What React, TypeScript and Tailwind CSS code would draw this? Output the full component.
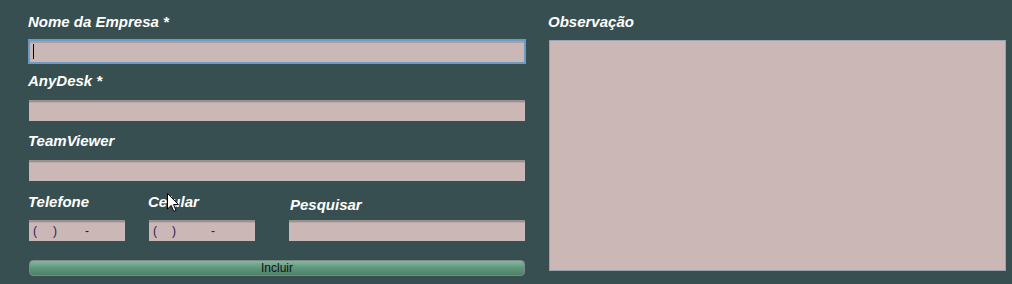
import React from 'react';

const font = 'font-["Liberation_Sans",Arial,sans-serif]';
const labelCls = `${font} text-[15px] leading-[16px] font-bold italic text-white`;
const inputCls =
  'h-[21px] bg-[#cbb7b5] border-t-2 border-t-[#9c908e] shadow-[inset_0_1px_0_#b9a9a7] text-[12px] leading-[19px] text-[#222] px-[4px] outline-none';

function MaskedPhone({ width, inner, spacing }: { width: string; inner: string; spacing: string }) {
  return (
    <div className={`${inputCls} ${width} ${font} flex items-center`}>
      <span className="text-[#2a2050]">(</span>
      <span className={inner} />
      <span className="text-[#2a2050]">)</span>
      <span className={spacing} />
      <span>-</span>
    </div>
  );
}

function Cursor() {
  return (
    <svg
      className="absolute left-[167px] top-[193px]"
      width="13"
      height="20"
      viewBox="0 0 13 20"
    >
      <path
        d="M0.5 0.5 L0.5 16 L4.2 12.4 L6.8 18.4 L9 17.4 L6.5 11.6 L11.5 11.6 Z"
        fill="#fff"
        stroke="#000"
        strokeWidth="1"
      />
    </svg>
  );
}

export default function App() {
  return (
    <div className="relative w-[1012px] h-[284px] bg-[#374f50] overflow-hidden flex pl-[28px] pt-[14px]">
      {/* left column */}
      <div className="w-[498px] flex flex-col">
        <label className={labelCls}>Nome da Empresa *</label>
        <div className="mt-[9px] h-[25px] border-2 border-[#6c9bc6] bg-[#cbb7b5] shadow-[inset_0_2px_0_#a8a0a4] flex items-center pl-[3px]">
          <span className="w-px h-[15px] bg-black" />
        </div>

        <label className={`${labelCls} mt-[9px]`}>AnyDesk *</label>
        <div className={`${inputCls} mt-[11px] ml-px w-[496px]`} />

        <label className={`${labelCls} mt-[12px]`}>TeamViewer</label>
        <div className={`${inputCls} mt-[11px] ml-px w-[496px]`} />

        <div className="flex mt-[13px]">
          <div className="flex flex-col w-[120px]">
            <label className={labelCls}>Telefone</label>
            <div className="mt-[10px] ml-px">
              <MaskedPhone width="w-[96px]" inner="w-[16px]" spacing="w-[28px]" />
            </div>
          </div>
          <div className="flex flex-col w-[142px]">
            <label className={labelCls}>Celular</label>
            <div className="mt-[10px] ml-px">
              <MaskedPhone width="w-[106px]" inner="w-[15px]" spacing="w-[35px]" />
            </div>
          </div>
          <div className="flex flex-col">
            <label className={`${labelCls} mt-[3px]`}>Pesquisar</label>
            <div className={`${inputCls} mt-[7px] -ml-px w-[236px]`} />
          </div>
        </div>

        <button
          className={`${font} mt-[19px] ml-px w-[496px] h-[16px] rounded-[4px] border border-[#7d8a86] bg-gradient-to-b from-[#84b9a0] via-[#5f967c] to-[#4f8169] text-[12px] leading-[14px] text-[#111]`}
        >
          Incluir
        </button>
      </div>

      {/* right column */}
      <div className="ml-[22px] flex flex-col">
        <label className={labelCls}>Observação</label>
        <div className="mt-[10px] ml-px w-[457px] h-[231px] bg-[#cbb7b5] border border-[#9aa2ae]" />
      </div>

      <Cursor />
    </div>
  );
}
